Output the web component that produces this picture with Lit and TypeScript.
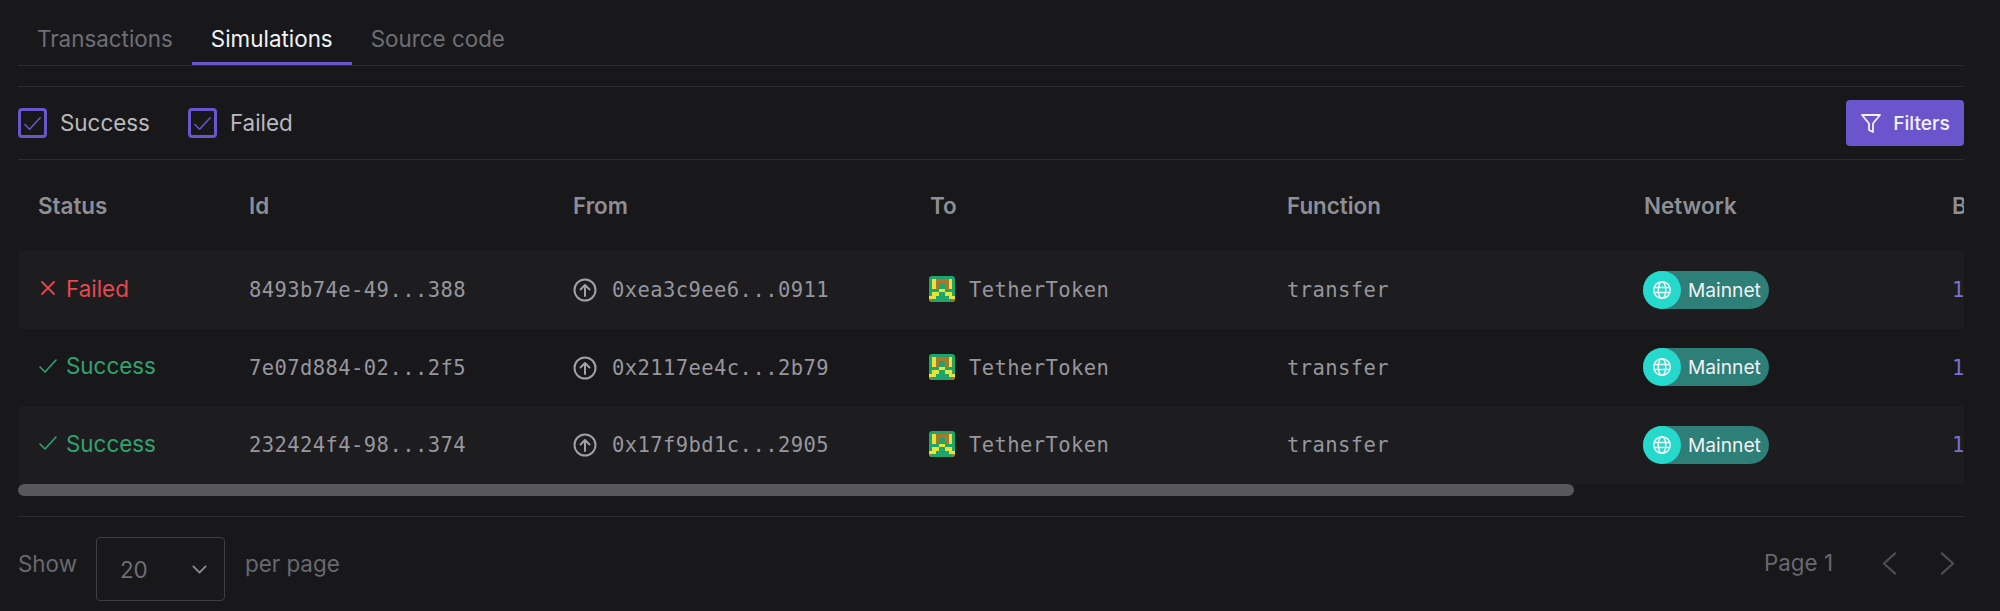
import { LitElement, html, css, svg } from "lit";
import { customElement } from "lit/decorators.js";

const rows = [
  { ok: false, id: "8493b74e-49...388", from: "0xea3c9ee6...0911" },
  { ok: true, id: "7e07d884-02...2f5", from: "0x2117ee4c...2b79" },
  { ok: true, id: "232424f4-98...374", from: "0x17f9bd1c...2905" },
];

const identiconCells = [
  "........",
  ".ybbbby.",
  ".yb..by.",
  ".yb..by.",
  "...yy...",
  ".yy..yy.",
  "yy....yy",
  "b......b",
];

const checkIcon = html`<svg class="tick" viewBox="0 0 24 24" fill="none" stroke="currentColor" stroke-width="1.6" stroke-linecap="round" stroke-linejoin="round"><path d="M4 13l5 5L20 6"/></svg>`;
const crossIcon = html`<svg class="tick" viewBox="0 0 24 24" fill="none" stroke="currentColor" stroke-width="1.8" stroke-linecap="round"><path d="M6 6l12 12M18 6L6 18"/></svg>`;

@customElement("app-root")
export class AppRoot extends LitElement {
  static styles = css`
    :host { display: block; height: 611px; background: #18181b; font-family: Inter, "Noto Sans", sans-serif; overflow: hidden; }
    .page { margin: 0 36px 0 18px; display: flex; flex-direction: column; }
    .tabs { display: flex; height: 66px; padding-top: 15px; border-bottom: 1px solid #2c2c30; box-sizing: border-box; }
    .tab { height: 50px; box-sizing: border-box; padding: 0 19px; display: flex; align-items: center; font-size: 22.4px; color: #6e6e75; border-bottom: 3px solid transparent; }
    .tab.active { color: #f2f2f4; border-bottom-color: #6b55cd; }
    .bar { margin-top: 20px; height: 72px; border-top: 1px solid #2c2c30; border-bottom: 1px solid #2c2c30; display: flex; align-items: center; gap: 38px; }
    .check { display: flex; align-items: center; gap: 13px; font-size: 22.4px; color: #b9b9be; }
    .txt { margin-top: -2px; }
    .box { width: 29px; height: 30px; box-sizing: border-box; border: 3px solid #6b55cd; border-radius: 4px; display: flex; align-items: center; justify-content: center; color: #6b55cd; }
    .box svg { width: 23px; height: 23px; flex: none; }
    .btn { margin-left: auto; width: 118px; height: 46px; border-radius: 4px; background: #6b55cd; color: #f4f2fc; display: flex; align-items: center; justify-content: center; gap: 10px; font-size: 19.2px; font-weight: 500; padding-right: 1px; box-sizing: border-box; }
    .btn svg { width: 24px; height: 24px; }
    .table { overflow: hidden; }
    .row { display: grid; grid-template-columns: 211px 324px 357px 357px 357px 308px 200px; width: 2440px; align-items: center; }
    .head { height: 91px; font-size: 22.4px; font-weight: 600; color: #8e8e95; }
    .cell { padding-left: 20px; display: flex; align-items: center; white-space: nowrap; }
    .data { height: 77.5px; }
    .data:nth-child(even) { background: #1d1d20; border-radius: 4px 0 0 4px; }
    .status { font-size: 22.4px; gap: 6px; padding-bottom: 3px; padding-left: 18px; }
    .status.bad { color: #e5484d; }
    .status.good { color: #30a46c; }
    .tick { width: 24px; height: 24px; flex: none; }
    .mono { font-family: "DejaVu Sans Mono", "Liberation Mono", monospace; font-size: 20.5px; letter-spacing: 0.42px; color: #96969c; padding-top: 1px; }
    .from { gap: 15px; }
    .up { width: 24px; height: 24px; color: #a0a0a6; flex: none; }
    .to { gap: 14px; }
    .identicon { width: 26px; height: 26px; flex: none; border-radius: 3px; margin: -2px 0 0 -1px; }
    .net { display: flex; align-items: center; width: 126px; height: 38px; margin-left: -1px; border-radius: 19px; background: #2d7f78; color: #f2f2f4; font-size: 19.2px; gap: 7px; }
    .globe { width: 38px; height: 38px; border-radius: 19px; background: #25d9cc; display: flex; align-items: center; justify-content: center; flex: none; }
    .globe svg { width: 20px; height: 20px; }
    .mono.num { color: #7e6fd0; }
    .scroll { height: 12px; margin-top: 0.5px; }
    .thumb { width: 1556px; height: 12px; border-radius: 6px; background: #58585c; }
    .foot { margin-top: 20px; border-top: 1px solid #2c2c30; height: 94px; display: flex; align-items: flex-start; color: #68686f; font-size: 22.4px; }
    .show { display: flex; align-items: center; height: 64px; margin-top: 20px; gap: 19px; }
    .lbl { margin-top: -11px; }
    .select { width: 129px; height: 64px; margin-right: 1px; box-sizing: border-box; border: 1.5px solid #3e3e43; border-radius: 4px; display: flex; align-items: center; justify-content: space-between; padding: 0 14px 0 23px; font-size: 22.4px; color: #6e6e75; }
    .select svg { width: 21px; height: 21px; color: #8a8a90; }
    .pager { margin-left: auto; display: flex; align-items: center; height: 92px; }
    .pager span { margin-right: 43px; margin-top: -1px; }
    .pager svg { width: 27px; height: 27px; color: #4d4d52; }
    .pager svg + svg { margin-left: 31px; margin-right: 3px; }
  `;

  private identicon() {
    const colours: Record<string, string> = { y: "#e3e53a", b: "#a8792c" };
    return html`<svg class="identicon" viewBox="0 0 8 8" shape-rendering="crispEdges">
      <rect width="8" height="8" fill="#1fa56c"/>
      ${identiconCells.map((line, y) => [...line].map((c, x) => c === "." ? null : svg`<rect x=${x} y=${y} width="1" height="1" fill=${colours[c]}/>`))}
    </svg>`;
  }

  render() {
    return html`<div class="page">
      <div class="tabs">
        <div class="tab">Transactions</div>
        <div class="tab active">Simulations</div>
        <div class="tab">Source code</div>
      </div>
      <div class="bar">
        <div class="check"><span class="box">${checkIcon}</span><span class="txt">Success</span></div>
        <div class="check"><span class="box">${checkIcon}</span><span class="txt">Failed</span></div>
        <div class="btn">
          <svg viewBox="0 0 24 24" fill="none" stroke="currentColor" stroke-width="1.8" stroke-linejoin="round"><path d="M3 4h18l-7 8.500V21l-4-2v-6.500z"/></svg>
          Filters
        </div>
      </div>
      <div class="table">
        <div class="row head">
          ${["Status", "Id", "From", "To", "Function", "Network", "Block"].map((h) => html`<div class="cell">${h}</div>`)}
        </div>
        ${rows.map((r) => html`<div class="row data">
          <div class="cell status ${r.ok ? "good" : "bad"}">${r.ok ? checkIcon : crossIcon}${r.ok ? "Success" : "Failed"}</div>
          <div class="cell mono">${r.id}</div>
          <div class="cell mono from">
            <svg class="up" viewBox="0 0 24 24" fill="none" stroke="currentColor" stroke-width="2" stroke-linecap="round" stroke-linejoin="round"><circle cx="12" cy="12" r="10.500"/><path d="M12 18V7M7.500 11.500L12 7l4.500 4.500"/></svg>
            ${r.from}
          </div>
          <div class="cell mono to">${this.identicon()}TetherToken</div>
          <div class="cell mono">transfer</div>
          <div class="cell">
            <div class="net">
              <span class="globe"><svg viewBox="0 0 24 24" fill="none" stroke="#f2f2f4" stroke-width="1.8"><circle cx="12" cy="12" r="10"/><ellipse cx="12" cy="12" rx="4.500" ry="10"/><path d="M2.500 9h19M2.500 15h19"/></svg></span>
              Mainnet
            </div>
          </div>
          <div class="cell mono num">18</div>
        </div>`)}
      </div>
      <div class="scroll"><div class="thumb"></div></div>
      <div class="foot">
        <div class="show">
          <span class="lbl">Show</span>
          <div class="select">20
            <svg viewBox="0 0 24 24" fill="none" stroke="currentColor" stroke-width="2.200" stroke-linecap="round" stroke-linejoin="round"><path d="M5 8.500l7 7 7-7"/></svg>
          </div>
          <span class="lbl">per page</span>
        </div>
        <div class="pager">
          <span>Page 1</span>
          <svg viewBox="0 0 24 24" fill="none" stroke="currentColor" stroke-width="2" stroke-linecap="round" stroke-linejoin="round"><path d="M17 3l-10 9 10 9"/></svg>
          <svg viewBox="0 0 24 24" fill="none" stroke="currentColor" stroke-width="2" stroke-linecap="round" stroke-linejoin="round"><path d="M7 3l10 9-10 9"/></svg>
        </div>
      </div>
    </div>`;
  }
}
